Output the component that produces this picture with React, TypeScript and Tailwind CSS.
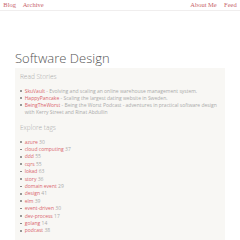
import React from "react";

const stories = [
  { name: "SkuVault", desc: "Evolving and scaling an online warehouse management system." },
  { name: "HappyPancake", desc: "Scaling the largest dating website in Sweden." },
  {
    name: "BeingTheWorst",
    desc: "Being the Worst Podcast - adventures in practical software design with Kerry Street and Rinat Abdullin",
  },
];

const tags: [string, number][] = [
  ["azure", 30],
  ["cloud computing", 37],
  ["ddd", 55],
  ["cqrs", 55],
  ["lokad", 63],
  ["story", 36],
  ["domain event", 29],
  ["design", 41],
  ["elm", 39],
  ["event-driven", 30],
  ["dev-process", 17],
  ["golang", 14],
  ["podcast", 38],
];

function Dot() {
  return (
    <span className="flex h-[7px] w-[4.7px] shrink-0 items-center">
      <span className="block h-[1.6px] w-[1.6px] rounded-full bg-[#777]" />
    </span>
  );
}

export default function App() {
  return (
    <div className="h-[240px] w-[240px] overflow-hidden bg-white" style={{ fontFamily: '"Open Sans", sans-serif' }}>
      <header
        className="flex h-[11px] items-center justify-between border-b border-[#f0eeee] px-[3.3px] text-[6.5px] leading-[8px] text-[#c8636a]"
        style={{ fontFamily: '"Liberation Serif", serif' }}
      >
        <div className="flex gap-[6.7px]">
          <span>Blog</span>
          <span>Archive</span>
        </div>
        <div className="flex gap-[7.3px]">
          <span>About Me</span>
          <span>Feed</span>
        </div>
      </header>
      <main className="px-[15px]">
        <h1 className="mt-[39px] text-[13px] font-light leading-[16px] text-[#555]">Software Design</h1>
        <section className="mt-[2px] bg-[#f8f7f4] pb-[10px] pl-[5px] pr-[5px] pt-[5px]">
          <h2 className="text-[6.5px] font-light leading-[8px] text-[#aaa]">Read Stories</h2>
          <ul className="mt-[6.5px] text-[5px] leading-[7px]">
            {stories.map((s) => (
              <li key={s.name} className="flex">
                <Dot />
                <span className="text-[#aaa]">
                  <span className="text-[#d9646b]">{s.name}</span> - {s.desc}
                </span>
              </li>
            ))}
          </ul>
          <h2 className="mt-[8px] text-[6.5px] font-light leading-[8px] text-[#aaa]">Explore tags</h2>
          <ul className="mt-[7px] text-[5px] leading-[7.4px]">
            {tags.map(([t, n]) => (
              <li key={t} className="flex">
                <Dot />
                <span className="text-[#aaa]">
                  <span className="text-[#d9646b]">{t}</span> {n}
                </span>
              </li>
            ))}
          </ul>
        </section>
      </main>
    </div>
  );
}
